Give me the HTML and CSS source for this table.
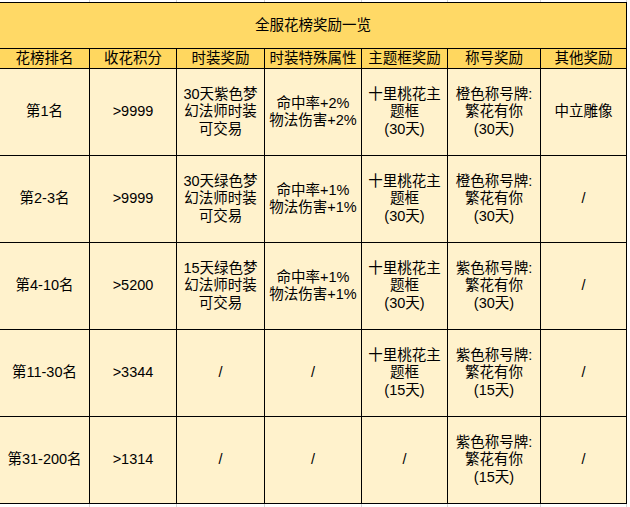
FILE: index.html
```html
<!DOCTYPE html>
<html lang="zh-CN">
<head>
<meta charset="utf-8">
<title>全服花榜奖励一览</title>
<link rel="stylesheet" href="styles.css">
</head>
<body>
<div class="sheet">
  <div class="cell title">全服花榜奖励一览</div>

  <div class="cell head">花榜排名</div>
  <div class="cell head">收花积分</div>
  <div class="cell head">时装奖励</div>
  <div class="cell head">时装特殊属性</div>
  <div class="cell head">主题框奖励</div>
  <div class="cell head">称号奖励</div>
  <div class="cell head">其他奖励</div>

  <div class="cell">第1名</div>
  <div class="cell">&gt;9999</div>
  <div class="cell">30天紫色梦<br>幻法师时装<br>可交易</div>
  <div class="cell">命中率+2%<br>物法伤害+2%</div>
  <div class="cell">十里桃花主<br>题框<br>(30天)</div>
  <div class="cell">橙色称号牌:<br>繁花有你<br>(30天)</div>
  <div class="cell">中立雕像</div>

  <div class="cell">第2-3名</div>
  <div class="cell">&gt;9999</div>
  <div class="cell">30天绿色梦<br>幻法师时装<br>可交易</div>
  <div class="cell">命中率+1%<br>物法伤害+1%</div>
  <div class="cell">十里桃花主<br>题框<br>(30天)</div>
  <div class="cell">橙色称号牌:<br>繁花有你<br>(30天)</div>
  <div class="cell">/</div>

  <div class="cell">第4-10名</div>
  <div class="cell">&gt;5200</div>
  <div class="cell">15天绿色梦<br>幻法师时装<br>可交易</div>
  <div class="cell">命中率+1%<br>物法伤害+1%</div>
  <div class="cell">十里桃花主<br>题框<br>(30天)</div>
  <div class="cell">紫色称号牌:<br>繁花有你<br>(30天)</div>
  <div class="cell">/</div>

  <div class="cell">第11-30名</div>
  <div class="cell">&gt;3344</div>
  <div class="cell">/</div>
  <div class="cell">/</div>
  <div class="cell">十里桃花主<br>题框<br>(15天)</div>
  <div class="cell">紫色称号牌:<br>繁花有你<br>(15天)</div>
  <div class="cell">/</div>

  <div class="cell">第31-200名</div>
  <div class="cell">&gt;1314</div>
  <div class="cell">/</div>
  <div class="cell">/</div>
  <div class="cell">/</div>
  <div class="cell">紫色称号牌:<br>繁花有你<br>(15天)</div>
  <div class="cell">/</div>
</div>
</body>
</html>
```

FILE: styles.css
```css
html, body {
  margin: 0;
  padding: 0;
}

body {
  width: 630px;
  height: 507px;
  overflow: hidden;
  background-color: #ffffff;
  background-image:
    linear-gradient(#d4d4d4, #d4d4d4),
    linear-gradient(#d4d4d4, #d4d4d4),
    linear-gradient(#d4d4d4, #d4d4d4),
    linear-gradient(#d4d4d4, #d4d4d4),
    linear-gradient(#d4d4d4, #d4d4d4),
    linear-gradient(#d4d4d4, #d4d4d4),
    linear-gradient(#d4d4d4, #d4d4d4);
  background-size: 1px 100%;
  background-repeat: no-repeat;
  background-position: 89px 0, 176px 0, 264px 0, 361px 0, 447px 0, 540px 0, 626px 0;
  font-family: "Liberation Sans", "Noto Sans CJK SC", sans-serif;
  font-size: 14.5px;
  color: #000;
}

.sheet {
  display: grid;
  grid-template-columns: 89px 86px 87px 96px 85px 92px 85px;
  grid-template-rows: 45px 19px 86px 86px 86px 86px 86px;
  gap: 1px;
  padding: 1px;
  background: #000;
  width: max-content;
  margin: 2px 0 0 -1px;
}

.cell {
  background: #fff2cc;
  display: flex;
  align-items: center;
  justify-content: center;
  text-align: center;
  line-height: 17.5px;
  white-space: nowrap;
}

.title {
  grid-column: 1 / -1;
  background: #ffd966;
}

.head {
  background: #ffd75f;
}
```
